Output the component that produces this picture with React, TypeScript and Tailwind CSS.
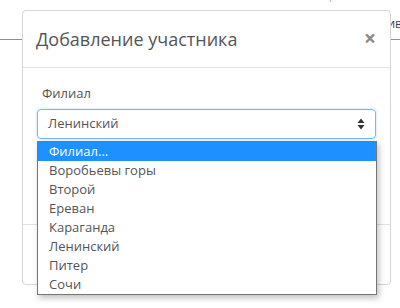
import React from "react";

const branches = [
  "Филиал...",
  "Воробьевы горы",
  "Второй",
  "Ереван",
  "Караганда",
  "Ленинский",
  "Питер",
  "Сочи",
];

const SortIcon = () => (
  <svg width="8" height="12" viewBox="0 0 8 12">
    <path d="M4 0.5 L7.5 5 L0.5 5 Z" fill="#333" />
    <path d="M4 11.5 L7.5 7 L0.5 7 Z" fill="#333" />
  </svg>
);

export default function App() {
  return (
    <div
      className="relative w-[400px] h-[308px] overflow-hidden bg-white"
      style={{ fontFamily: '"Open Sans", "Liberation Sans", sans-serif' }}
    >
      {/* page behind the modal */}
      <div className="flex justify-end h-[10px] -mt-[12px] pr-[4px] gap-[8px] text-[12px] text-[#aaa] leading-[14px]">
        <span>Экспорт в Excel</span>
        <span className="text-[#f0ad4e]">•</span>
      </div>
      <div className="flex justify-end pt-[19px] text-[12px] text-[#444] leading-[14px] -mr-[2px]">
        <span>ив</span>
      </div>
      <div className="mt-[8px] h-px bg-[#5b9bd5]" />

      {/* modal */}
      <div className="absolute left-[22px] top-[10px] w-[369px] h-[275px] bg-white border border-[#d6d6d6] rounded-[4px] flex flex-col">
        <div className="h-[57px] shrink-0 flex items-center justify-between pl-[13px] pr-[14px] border-b border-[#e2e2e2]">
          <h4 className="text-[18px] text-[#555] leading-none">Добавление участника</h4>
          <span className="text-[21px] font-bold text-[#8a8a8a] leading-none -mt-[2px]">×</span>
        </div>
        <div className="flex-1 px-[14px] pt-[16px]">
          <div className="text-[13px] text-[#555] leading-[18px] pl-[5px]">Филиал</div>
          <div className="mt-[7px] h-[30px] rounded-[4px] border border-[#7fb4ee] flex items-center justify-between pl-[10px] pr-[10px] text-[13px] text-[#555] shadow-[0_0_3px_rgba(102,175,233,0.45)]">
            <span>Ленинский</span>
            <SortIcon />
          </div>
        </div>
        <div className="h-[60px] shrink-0 border-t border-[#e2e2e2]" />

        {/* open select list */}
        <ul className="absolute left-[14px] top-[130px] w-[340px] bg-white border border-[#767676] shadow-[2px_3px_6px_rgba(0,0,0,0.25)] text-[13px] text-[#555]">
          {branches.map((b, i) => (
            <li
              key={b}
              className={
                i === 0
                  ? "h-[19px] leading-[19px] pl-[11px] bg-[#1e90ff] text-white"
                  : "h-[19px] leading-[19px] pl-[11px]"
              }
            >
              {b}
            </li>
          ))}
        </ul>
      </div>
    </div>
  );
}
